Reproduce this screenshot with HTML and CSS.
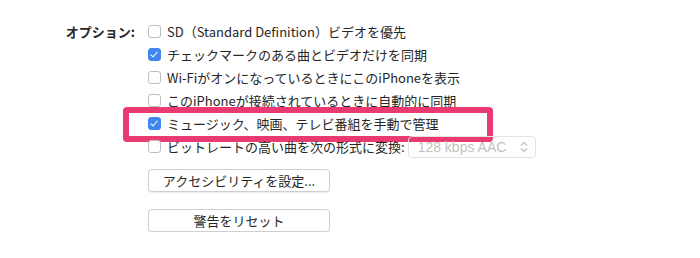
FILE: index.html
```html
<!DOCTYPE html>
<html lang="ja">
<head>
    <meta charset="UTF-8">
    <meta name="viewport" content="width=device-width, initial-scale=1.0">
    <title>オプション</title>
    <link rel="stylesheet" href="styles.css">
</head>
<body>
    <div class="prefs">
        <div class="prefs-label">オプション:</div>
        <div class="prefs-options">
            <div class="option">
                <span class="check"></span>
                <span class="option-text">SD（Standard Definition）ビデオを優先</span>
            </div>
            <div class="option">
                <span class="check checked"></span>
                <span class="option-text">チェックマークのある曲とビデオだけを同期</span>
            </div>
            <div class="option">
                <span class="check"></span>
                <span class="option-text">Wi-FiがオンになっているときにこのiPhoneを表示</span>
            </div>
            <div class="option">
                <span class="check"></span>
                <span class="option-text">このiPhoneが接続されているときに自動的に同期</span>
            </div>
            <div class="option highlighted">
                <span class="check checked"></span>
                <span class="option-text">ミュージック、映画、テレビ番組を手動で管理</span>
                <div class="highlight-box"></div>
            </div>
            <div class="option">
                <span class="check"></span>
                <span class="option-text">ビットレートの高い曲を次の形式に変換:</span>
                <div class="popup">
                    <span>128 kbps AAC</span>
                    <svg class="stepper" width="8" height="12" viewBox="0 0 8 12">
                        <path d="M1 4.5 L4 1.5 L7 4.5" fill="none" stroke="#c4c4c4" stroke-width="1.3"/>
                        <path d="M1 7.5 L4 10.5 L7 7.5" fill="none" stroke="#c4c4c4" stroke-width="1.3"/>
                    </svg>
                </div>
            </div>
            <button class="btn btn-first">アクセシビリティを設定...</button>
            <button class="btn">警告をリセット</button>
        </div>
    </div>
</body>
</html>
```

FILE: styles.css
```css
body {
    margin: 0;
    padding: 0;
    background: #ffffff;
    font-family: "Noto Sans CJK JP", "Liberation Sans", sans-serif;
    font-size: 13px;
    color: #262626;
}
.prefs {
    display: flex;
    padding-top: 20px;
}
.prefs-label {
    width: 135px;
    text-align: right;
    font-weight: bold;
    line-height: 23px;
    margin-right: 13px;
}
.prefs-options {
    display: flex;
    flex-direction: column;
    align-items: flex-start;
}
.option {
    position: relative;
    display: flex;
    align-items: center;
    height: 23px;
    white-space: nowrap;
}
.check {
    width: 11px;
    height: 11px;
    border: 1px solid #bdbdbd;
    border-radius: 3px;
    background: #fff;
    margin-right: 6px;
    position: relative;
    flex-shrink: 0;
}
.check.checked {
    background: #3f86ee;
    border-color: #3f86ee;
}
.check.checked::after {
    content: "";
    position: absolute;
    left: 3px;
    top: 1px;
    width: 3px;
    height: 6px;
    border: solid #fff;
    border-width: 0 1.6px 1.6px 0;
    transform: rotate(40deg);
}
.highlight-box {
    position: absolute;
    left: -25px;
    top: -5px;
    width: 358px;
    height: 23px;
    border: 6px solid #ea3a72;
    border-radius: 4px;
}
.popup {
    display: flex;
    align-items: center;
    justify-content: space-between;
    box-sizing: border-box;
    width: 128px;
    height: 22px;
    margin-left: 3px;
    padding: 0 7px 0 9px;
    border: 1px solid #e3e3e3;
    border-radius: 4px;
    color: #c2c2c2;
    font-family: "Liberation Sans", sans-serif;
    font-size: 14px;
}
.btn {
    width: 182px;
    height: 23px;
    padding: 0;
    background: #fff;
    border: 1px solid #cfcfcf;
    border-radius: 4px;
    box-shadow: 0 1px 1px rgba(0, 0, 0, 0.08);
    font-family: "Noto Sans CJK JP", "Liberation Sans", sans-serif;
    font-size: 13px;
    color: #262626;
    margin-top: 17px;
}
.btn-first {
    margin-top: 11px;
}
```
